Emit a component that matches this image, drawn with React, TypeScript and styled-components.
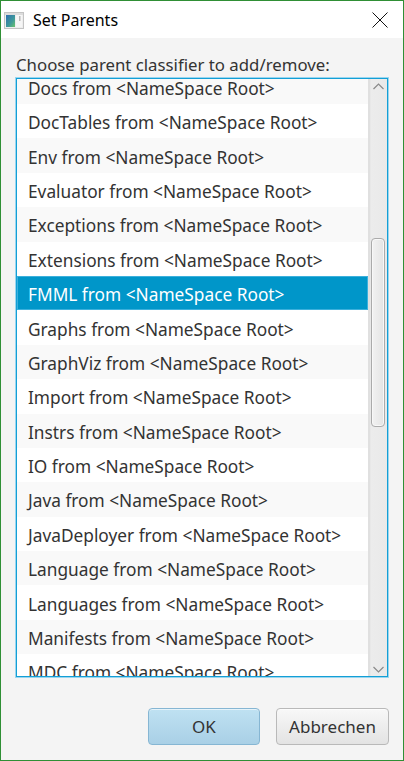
import React from 'react';
import styled, { createGlobalStyle } from 'styled-components';

const GlobalStyle = createGlobalStyle`
  html, body {
    margin: 0;
    padding: 0;
    background: #f4f4f4;
  }
  * {
    box-sizing: border-box;
  }
`;

const items = [
  'Docs', 'DocTables', 'Env', 'Evaluator', 'Exceptions', 'Extensions', 'FMML',
  'Graphs', 'GraphViz', 'Import', 'Instrs', 'IO', 'Java', 'JavaDeployer',
  'Language', 'Languages', 'Manifests', 'MDC',
];

const SELECTED = 'FMML';

const Window = styled.div`
  width: 404px;
  height: 761px;
  border: 1px solid #2f8f35;
  display: flex;
  flex-direction: column;
  font-family: "Noto Sans", "Open Sans", sans-serif;
  color: #333;
  overflow: hidden;
`;

const TitleBar = styled.div`
  height: 37px;
  background: #fff;
  display: flex;
  align-items: center;
  flex-shrink: 0;
`;

const AppIcon = styled.svg`
  margin-left: 3px;
  margin-top: 1px;
  flex-shrink: 0;
`;

const Title = styled.div`
  margin-left: 9px;
  font-size: 16px;
  color: #000;
  flex: 1;
`;

const CloseButton = styled.div`
  width: 46px;
  height: 37px;
  display: flex;
  align-items: center;
  justify-content: center;
`;

const Body = styled.div`
  flex: 1;
  background: #f4f4f4;
  display: flex;
  flex-direction: column;
  padding: 17px 0 0;
`;

const Prompt = styled.div`
  font-size: 16.8px;
  line-height: 20px;
  margin-left: 15px;
  color: #333;
`;

const FocusRing = styled.div`
  margin: 2px 14px 0 14px;
  border: 1px solid #9ad6ef;
  height: 601px;
`;

const ListBox = styled.div`
  height: 100%;
  border: 1px solid #139fd6;
  display: flex;
  background: #fff;
`;

const Viewport = styled.div`
  flex: 1;
  overflow: hidden;
`;

const Rows = styled.div`
  margin-top: -9.4px;
`;

const Row = styled.div<{ $odd: boolean; $selected: boolean }>`
  height: 34.4px;
  display: flex;
  align-items: center;
  padding: 3px 0 0 11px;
  font-size: 17.3px;
  white-space: nowrap;
  background: ${p => (p.$selected ? '#0096c9' : p.$odd ? '#ffffff' : '#f9f9f9')};
  color: ${p => (p.$selected ? '#fff' : '#333')};
  box-shadow: ${p => (p.$selected ? 'inset 0 0 0 1px #3cb0dc' : 'none')};
`;

const ScrollBar = styled.div`
  width: 19px;
  display: flex;
  flex-direction: column;
  background: linear-gradient(to right, #dcdcdc 0px, #ececec 2px, #e9e9e9 100%);
  border-left: 1px solid #e0e0e0;
`;

const ArrowButton = styled.div`
  height: 14px;
  display: flex;
  align-items: center;
  justify-content: center;
  flex-shrink: 0;
`;

const Track = styled.div`
  flex: 1;
  padding: 0 2px 0 2px;
`;

const Thumb = styled.div`
  height: 189px;
  border: 1px solid #ababab;
  border-radius: 4px;
  background: linear-gradient(to right, #f2f2f2, #e4e4e4);
  box-shadow: inset 0 0 0 1px #f8f8f8;
`;

const ButtonBar = styled.div`
  display: flex;
  justify-content: flex-end;
  gap: 16px;
  padding: 0 14px 0 0;
  margin-top: 30px;
`;

const DialogButton = styled.button<{ $default?: boolean }>`
  height: 37px;
  width: ${p => (p.$default ? '112px' : '113px')};
  border-radius: 4px;
  font-family: "Noto Sans", "Open Sans", sans-serif;
  font-size: 17px;
  color: #333;
  padding: 0;
  border: 1px solid ${p => (p.$default ? '#86b6d3' : '#b9b9b9')};
  background: ${p =>
    p.$default
      ? 'linear-gradient(to bottom, #bfe1f2, #a9d0e6)'
      : 'linear-gradient(to bottom, #f8f8f8, #e3e3e3)'};
  box-shadow: inset 0 1px 0 rgba(255, 255, 255, 0.6);
`;

const THUMB_TOP = 238 - 93;

export default function App() {
  return (
    <>
      <GlobalStyle />
      <Window>
        <TitleBar>
          <AppIcon width="20" height="17" viewBox="0 0 20 17">
            <defs>
              <linearGradient id="ig" x1="0" y1="0" x2="1" y2="1">
                <stop offset="0" stopColor="#2f6fb0" />
                <stop offset="0.6" stopColor="#3f9a9a" />
                <stop offset="1" stopColor="#6cc46a" />
              </linearGradient>
            </defs>
            <rect x="0.5" y="0.5" width="19" height="16" fill="#eeeeee" stroke="#c4c4c4" />
            <rect x="1" y="1" width="18" height="2" fill="#dcdcdc" />
            <rect x="2" y="3" width="9" height="12" fill="url(#ig)" />
            <rect x="12" y="3" width="6" height="12" fill="#f6f6f6" />
            <rect x="15" y="4" width="1.5" height="5" fill="#b8b8b8" />
          </AppIcon>
          <Title>Set Parents</Title>
          <CloseButton>
            <svg width="16" height="16" viewBox="0 0 16 16">
              <path d="M0.5 0.5 L15.5 15.5 M15.5 0.5 L0.5 15.5" stroke="#111" strokeWidth="1" fill="none" />
            </svg>
          </CloseButton>
        </TitleBar>
        <Body>
          <Prompt>Choose parent classifier to add/remove:</Prompt>
          <FocusRing>
            <ListBox>
              <Viewport>
                <Rows>
                  {items.map((name, i) => (
                    <Row key={name} $odd={i % 2 === 1} $selected={name === SELECTED}>
                      {name} from &lt;NameSpace Root&gt;
                    </Row>
                  ))}
                </Rows>
              </Viewport>
              <ScrollBar>
                <ArrowButton>
                  <svg width="11" height="7" viewBox="0 0 11 7">
                    <path d="M0.5 6 L5.5 1 L10.5 6" stroke="#8a8a8a" strokeWidth="1.2" fill="none" />
                  </svg>
                </ArrowButton>
                <Track>
                  <Thumb style={{ marginTop: THUMB_TOP }} />
                </Track>
                <ArrowButton>
                  <svg width="11" height="7" viewBox="0 0 11 7">
                    <path d="M0.5 1 L5.5 6 L10.5 1" stroke="#8a8a8a" strokeWidth="1.2" fill="none" />
                  </svg>
                </ArrowButton>
              </ScrollBar>
            </ListBox>
          </FocusRing>
          <ButtonBar>
            <DialogButton $default>OK</DialogButton>
            <DialogButton>Abbrechen</DialogButton>
          </ButtonBar>
        </Body>
      </Window>
    </>
  );
}
